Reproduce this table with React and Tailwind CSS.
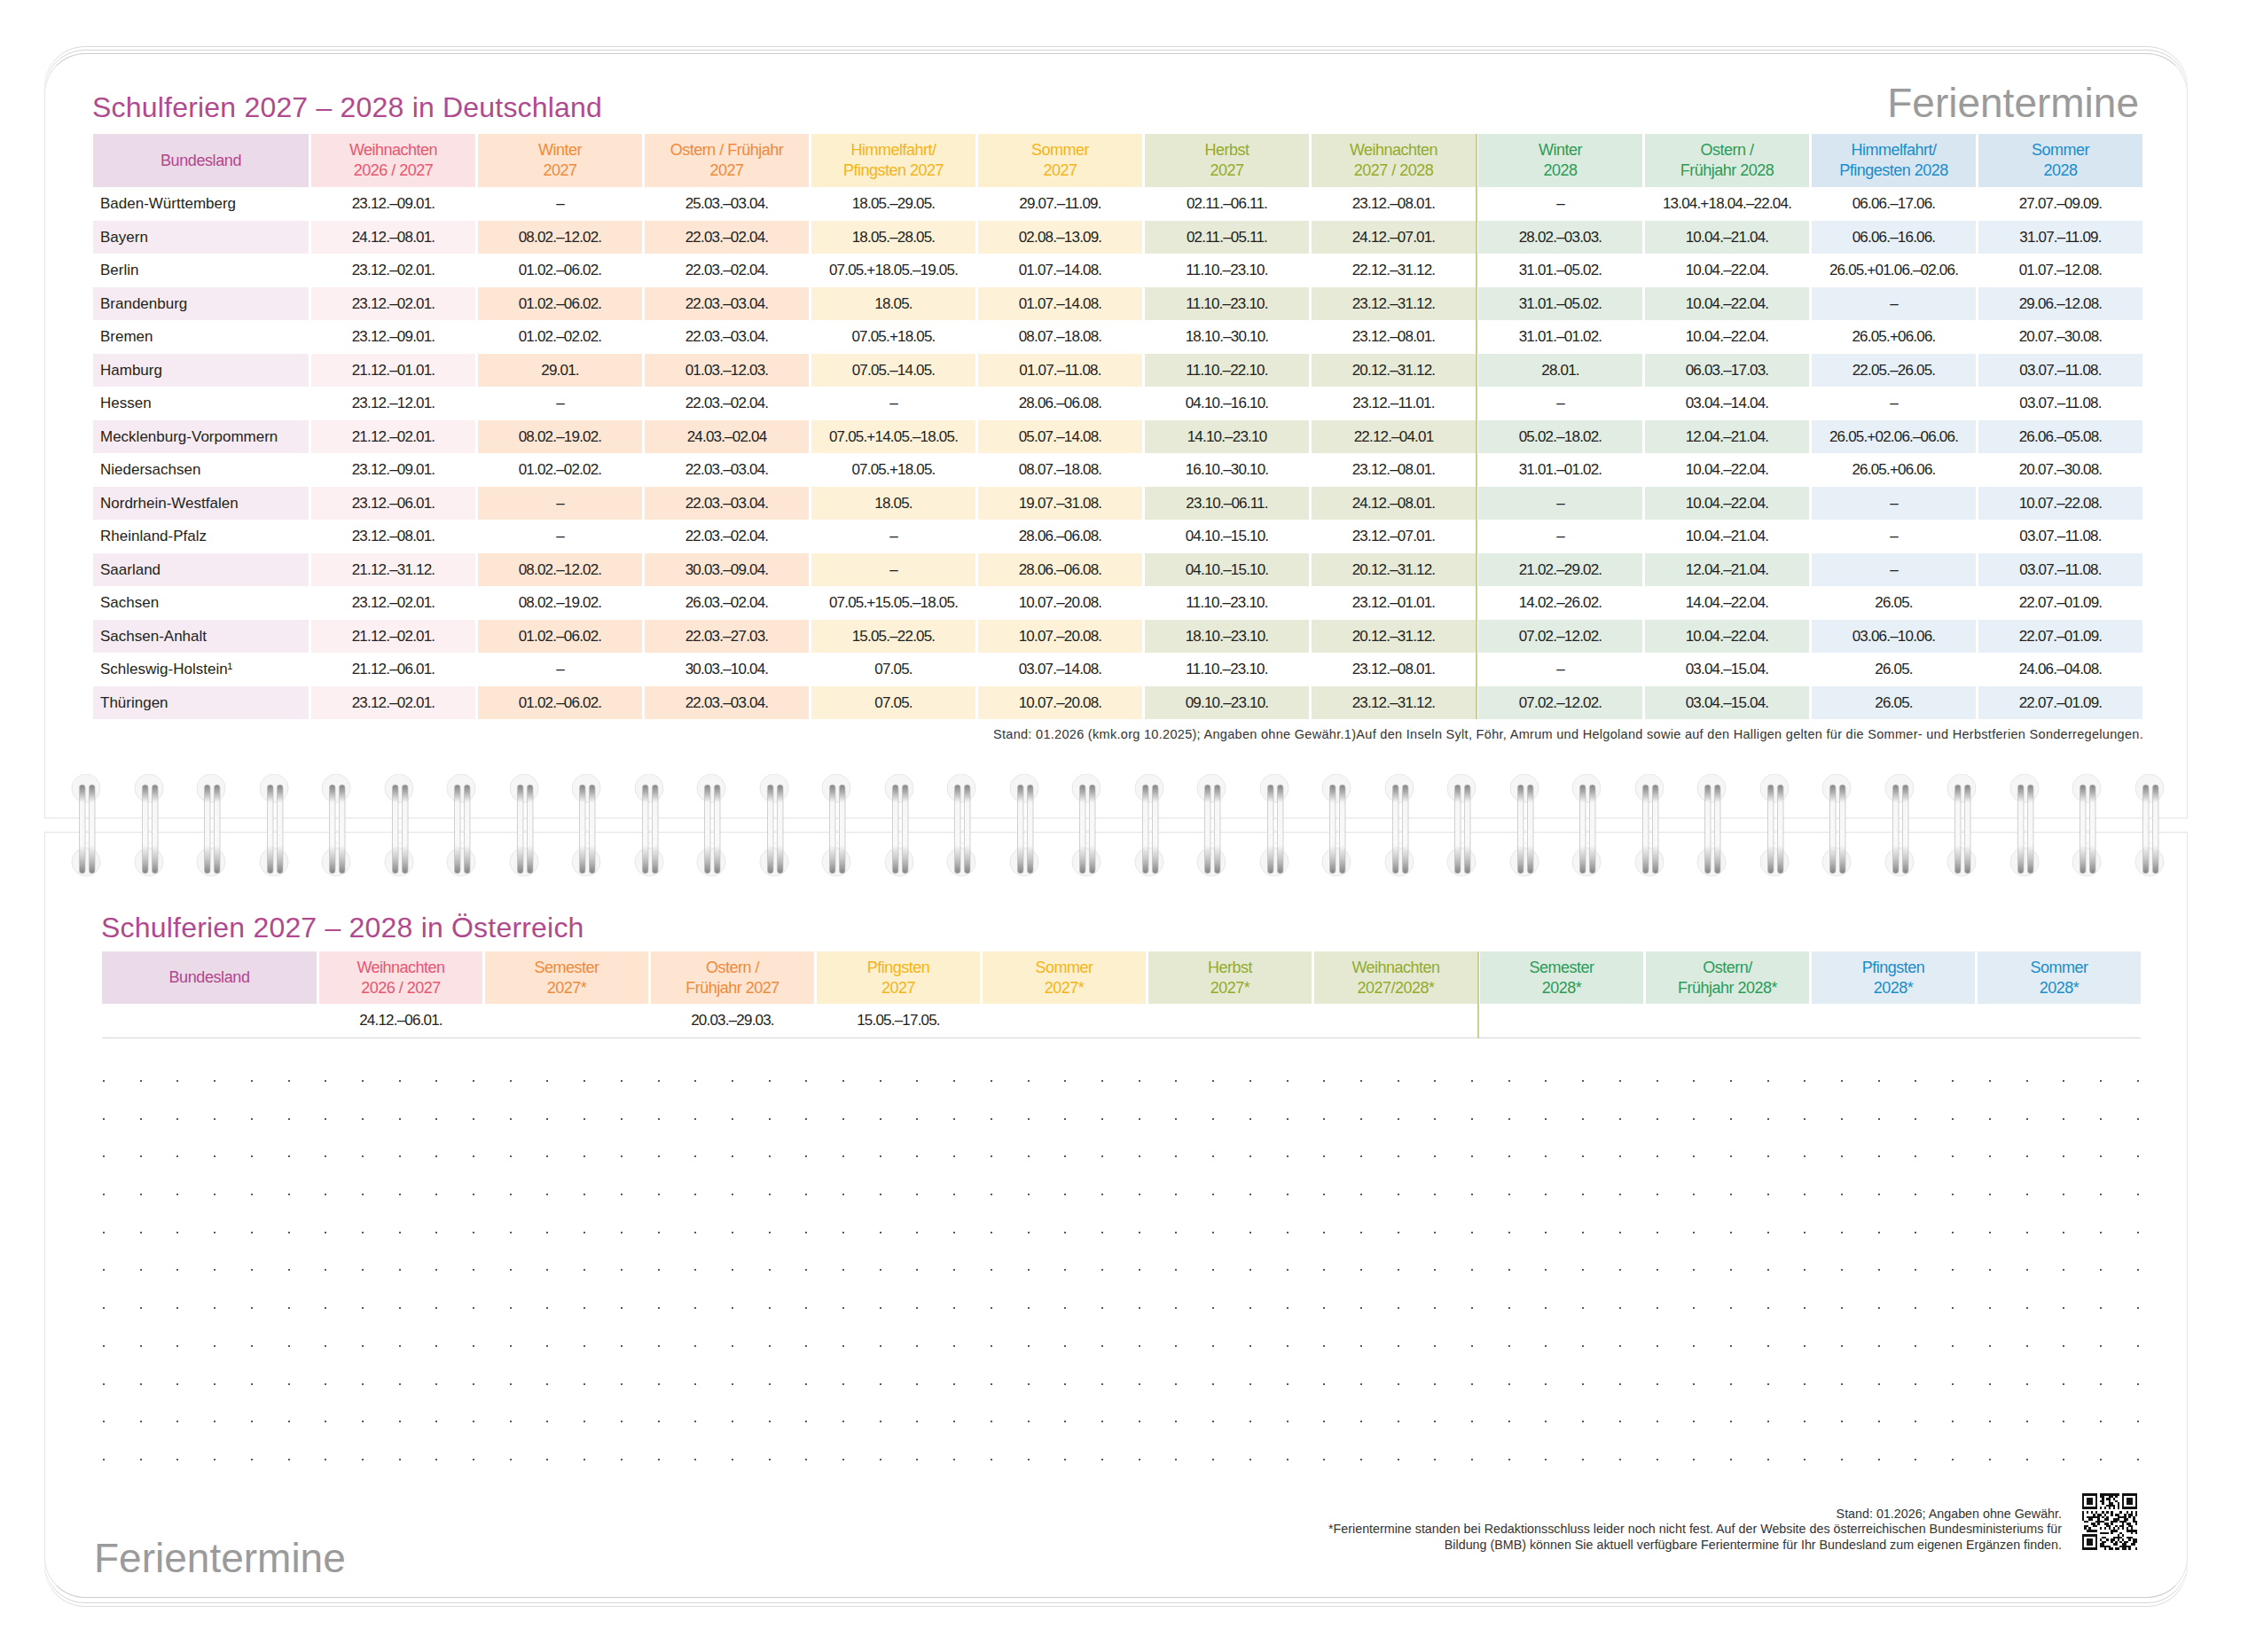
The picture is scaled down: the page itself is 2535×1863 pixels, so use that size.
import React from 'react';

// column colour groups: header fill + text, and the tint used on the shaded rows
const groups = {
  bl: { head: 'bg-[#ebdae7] text-[#b2478e]', alt: 'bg-[#f6ebf3]' },
  pink: { head: 'bg-[#fbe2e4] text-[#e9566f]', alt: 'bg-[#fdf0f2]' },
  orange: { head: 'bg-[#fde5d2] text-[#f08a3a]', alt: 'bg-[#fde6d4]' },
  yellow: { head: 'bg-[#fdf0cf] text-[#f4b417]', alt: 'bg-[#fdf2d7]' },
  olive: { head: 'bg-[#e6e9d2] text-[#93ab29]', alt: 'bg-[#e7ead6]' },
  green: { head: 'bg-[#dcebdf] text-[#2b9b58]', alt: 'bg-[#e1ede3]' },
  blue: { head: 'bg-[#d8e6f1] text-[#1a8dcb]', alt: 'bg-[#e7f0f7]' },
  blueAt: { head: 'bg-[#e2ecf5] text-[#1a8dcb]', alt: 'bg-[#e7f0f7]' },
};

const deCols = [
  { g: 'pink', label: ['Weihnachten', '2026 / 2027'] },
  { g: 'orange', label: ['Winter', '2027'] },
  { g: 'orange', label: ['Ostern / Frühjahr', '2027'] },
  { g: 'yellow', label: ['Himmelfahrt/', 'Pfingsten 2027'] },
  { g: 'yellow', label: ['Sommer', '2027'] },
  { g: 'olive', label: ['Herbst', '2027'] },
  { g: 'olive', label: ['Weihnachten', '2027 / 2028'] },
  { g: 'green', label: ['Winter', '2028'] },
  { g: 'green', label: ['Ostern /', 'Frühjahr 2028'] },
  { g: 'blue', label: ['Himmelfahrt/', 'Pfingesten 2028'] },
  { g: 'blue', label: ['Sommer', '2028'] },
];

const atCols = [
  { g: 'pink', label: ['Weihnachten', '2026 / 2027'] },
  { g: 'orange', label: ['Semester', '2027*'] },
  { g: 'orange', label: ['Ostern /', 'Frühjahr 2027'] },
  { g: 'yellow', label: ['Pfingsten', '2027'] },
  { g: 'yellow', label: ['Sommer', '2027*'] },
  { g: 'olive', label: ['Herbst', '2027*'] },
  { g: 'olive', label: ['Weihnachten', '2027/2028*'] },
  { g: 'green', label: ['Semester', '2028*'] },
  { g: 'green', label: ['Ostern/', 'Frühjahr 2028*'] },
  { g: 'blueAt', label: ['Pfingsten', '2028*'] },
  { g: 'blueAt', label: ['Sommer', '2028*'] },
];

const deRows = [
  ['Baden-Württemberg', '23.12.–09.01.', '–', '25.03.–03.04.', '18.05.–29.05.', '29.07.–11.09.', '02.11.–06.11.', '23.12.–08.01.', '–', '13.04.+18.04.–22.04.', '06.06.–17.06.', '27.07.–09.09.'],
  ['Bayern', '24.12.–08.01.', '08.02.–12.02.', '22.03.–02.04.', '18.05.–28.05.', '02.08.–13.09.', '02.11.–05.11.', '24.12.–07.01.', '28.02.–03.03.', '10.04.–21.04.', '06.06.–16.06.', '31.07.–11.09.'],
  ['Berlin', '23.12.–02.01.', '01.02.–06.02.', '22.03.–02.04.', '07.05.+18.05.–19.05.', '01.07.–14.08.', '11.10.–23.10.', '22.12.–31.12.', '31.01.–05.02.', '10.04.–22.04.', '26.05.+01.06.–02.06.', '01.07.–12.08.'],
  ['Brandenburg', '23.12.–02.01.', '01.02.–06.02.', '22.03.–03.04.', '18.05.', '01.07.–14.08.', '11.10.–23.10.', '23.12.–31.12.', '31.01.–05.02.', '10.04.–22.04.', '–', '29.06.–12.08.'],
  ['Bremen', '23.12.–09.01.', '01.02.–02.02.', '22.03.–03.04.', '07.05.+18.05.', '08.07.–18.08.', '18.10.–30.10.', '23.12.–08.01.', '31.01.–01.02.', '10.04.–22.04.', '26.05.+06.06.', '20.07.–30.08.'],
  ['Hamburg', '21.12.–01.01.', '29.01.', '01.03.–12.03.', '07.05.–14.05.', '01.07.–11.08.', '11.10.–22.10.', '20.12.–31.12.', '28.01.', '06.03.–17.03.', '22.05.–26.05.', '03.07.–11.08.'],
  ['Hessen', '23.12.–12.01.', '–', '22.03.–02.04.', '–', '28.06.–06.08.', '04.10.–16.10.', '23.12.–11.01.', '–', '03.04.–14.04.', '–', '03.07.–11.08.'],
  ['Mecklenburg-Vorpommern', '21.12.–02.01.', '08.02.–19.02.', '24.03.–02.04', '07.05.+14.05.–18.05.', '05.07.–14.08.', '14.10.–23.10', '22.12.–04.01', '05.02.–18.02.', '12.04.–21.04.', '26.05.+02.06.–06.06.', '26.06.–05.08.'],
  ['Niedersachsen', '23.12.–09.01.', '01.02.–02.02.', '22.03.–03.04.', '07.05.+18.05.', '08.07.–18.08.', '16.10.–30.10.', '23.12.–08.01.', '31.01.–01.02.', '10.04.–22.04.', '26.05.+06.06.', '20.07.–30.08.'],
  ['Nordrhein-Westfalen', '23.12.–06.01.', '–', '22.03.–03.04.', '18.05.', '19.07.–31.08.', '23.10.–06.11.', '24.12.–08.01.', '–', '10.04.–22.04.', '–', '10.07.–22.08.'],
  ['Rheinland-Pfalz', '23.12.–08.01.', '–', '22.03.–02.04.', '–', '28.06.–06.08.', '04.10.–15.10.', '23.12.–07.01.', '–', '10.04.–21.04.', '–', '03.07.–11.08.'],
  ['Saarland', '21.12.–31.12.', '08.02.–12.02.', '30.03.–09.04.', '–', '28.06.–06.08.', '04.10.–15.10.', '20.12.–31.12.', '21.02.–29.02.', '12.04.–21.04.', '–', '03.07.–11.08.'],
  ['Sachsen', '23.12.–02.01.', '08.02.–19.02.', '26.03.–02.04.', '07.05.+15.05.–18.05.', '10.07.–20.08.', '11.10.–23.10.', '23.12.–01.01.', '14.02.–26.02.', '14.04.–22.04.', '26.05.', '22.07.–01.09.'],
  ['Sachsen-Anhalt', '21.12.–02.01.', '01.02.–06.02.', '22.03.–27.03.', '15.05.–22.05.', '10.07.–20.08.', '18.10.–23.10.', '20.12.–31.12.', '07.02.–12.02.', '10.04.–22.04.', '03.06.–10.06.', '22.07.–01.09.'],
  ['Schleswig-Holstein¹', '21.12.–06.01.', '–', '30.03.–10.04.', '07.05.', '03.07.–14.08.', '11.10.–23.10.', '23.12.–08.01.', '–', '03.04.–15.04.', '26.05.', '24.06.–04.08.'],
  ['Thüringen', '23.12.–02.01.', '01.02.–06.02.', '22.03.–03.04.', '07.05.', '10.07.–20.08.', '09.10.–23.10.', '23.12.–31.12.', '07.02.–12.02.', '03.04.–15.04.', '26.05.', '22.07.–01.09.'],
];

const atData = ['24.12.–06.01.', '', '20.03.–29.03.', '15.05.–17.05.', '', '', '', '', '', '', ''];

const deGrid = 'grid grid-cols-[243px_repeat(11,185px)] gap-x-[3px]';
const atGrid = 'grid grid-cols-[242px_repeat(11,184px)] gap-x-[3px]';

function HeaderRow({ grid, cols, height }) {
  return (
    <div className={`${grid} ${height}`}>
      <div className={`flex items-center justify-center text-[18px] tracking-[-0.4px] ${groups.bl.head}`}>
        Bundesland
      </div>
      {cols.map((c, i) => (
        <div
          key={i}
          className={`flex flex-col items-center justify-center text-center text-[18px] leading-[23px] tracking-[-0.5px] ${groups[c.g].head}`}
        >
          <span>{c.label[0]}</span>
          <span>{c.label[1]}</span>
        </div>
      ))}
    </div>
  );
}

function Ring() {
  return (
    <svg width="40" height="120" viewBox="0 0 40 120" className="shrink-0">
      <defs>
        <linearGradient id="bar" x1="0" y1="0" x2="0" y2="1">
          <stop offset="0" stopColor="#858585" />
          <stop offset="0.08" stopColor="#ababab" />
          <stop offset="0.2" stopColor="#f7f7f7" />
          <stop offset="0.68" stopColor="#f9f9f9" />
          <stop offset="0.84" stopColor="#c6c6c6" />
          <stop offset="1" stopColor="#838383" />
        </linearGradient>
      </defs>
      <circle cx="20" cy="16" r="16" fill="#f7f6f7" stroke="#e9e6e9" strokeWidth="1" />
      <circle cx="20" cy="99" r="16" fill="#f7f6f7" stroke="#e9e6e9" strokeWidth="1" />
      {[12.5, 23.5].map((x) => (
        <rect key={x} x={x} y="12" width="6.5" height="100" rx="3.2" fill="url(#bar)" stroke="#bdbdbd" strokeWidth="0.7" />
      ))}
      <line x1="19.5" y1="50" x2="23.5" y2="50" stroke="#e4e4e4" strokeWidth="0.8" />
      <line x1="19.5" y1="64" x2="23.5" y2="64" stroke="#e4e4e4" strokeWidth="0.8" />
      <line x1="19.5" y1="78" x2="23.5" y2="78" stroke="#e4e4e4" strokeWidth="0.8" />
    </svg>
  );
}

function QrCode() {
  const n = 25;
  const mods = [];
  const inFinder = (x, y) => (x < 8 && y < 8) || (x >= n - 8 && y < 8) || (x < 8 && y >= n - 8);
  for (let y = 0; y < n; y++) {
    for (let x = 0; x < n; x++) {
      if (inFinder(x, y)) continue;
      let on;
      if (y === 6) on = x % 2 === 0;
      else if (x === 6) on = y % 2 === 0;
      else on = (x * 37 + y * 91 + x * y * 13 + (x ^ y) * 7) % 11 < 5;
      if (on) mods.push(<rect key={`${x}-${y}`} x={x} y={y} width="1" height="1" />);
    }
  }
  const finder = (x, y) => (
    <g key={`f${x}${y}`}>
      <rect x={x} y={y} width="7" height="7" fill="#111" />
      <rect x={x + 1} y={y + 1} width="5" height="5" fill="#fff" />
      <rect x={x + 2} y={y + 2} width="3" height="3" fill="#111" />
    </g>
  );
  return (
    <svg width="62" height="64" viewBox="0 0 25 25" preserveAspectRatio="none" shapeRendering="crispEdges" className="shrink-0">
      <g fill="#111">{mods}</g>
      {finder(0, 0)}
      {finder(n - 7, 0)}
      {finder(0, n - 7)}
    </svg>
  );
}

export default function App() {
  return (
    <div className="relative w-[2535px] h-[1863px] overflow-hidden bg-white pt-[60px] pl-[50px] font-['Liberation_Sans',Arial,sans-serif] text-[#231f20]">
      {/* upper page */}
      <div className="w-[2417px] h-[863px] rounded-t-[46px] border border-[#e6e2e6] border-t-[#cdc9cd] border-b-[#e8e1e9] bg-white pt-[32px] pl-[53px] pr-[50px] shadow-[0_-3px_0_0_#fff,0_-4px_0_0_#d6d3d6,0_-7px_0_0_#fff,0_-8px_0_0_#dcdadc]">
        <div className="flex items-baseline justify-between">
          <h1 className="text-[32px] leading-[32px] tracking-[0.2px] text-[#b04a8e]">Schulferien 2027 – 2028 in Deutschland</h1>
          <div className="mr-[4px] text-[46px] leading-[46px] text-[#9b9b9b]">Ferientermine</div>
        </div>

        <div className="relative ml-[1px] mt-[12px] w-[2311px]">
          <HeaderRow grid={deGrid} cols={deCols} height="h-[60px]" />
          {deRows.map((r, ri) => {
            const alt = ri % 2 === 1;
            return (
              <div key={r[0]} className={`${deGrid} h-[37.5px] text-[17px]`}>
                <div className={`flex items-center pl-[8px] ${alt ? groups.bl.alt : ''}`}>{r[0]}</div>
                {r.slice(1).map((v, i) => (
                  <div
                    key={i}
                    className={`flex items-center justify-center tracking-[-0.8px] ${alt ? groups[deCols[i].g].alt : ''}`}
                  >
                    {v}
                  </div>
                ))}
              </div>
            );
          })}
          <div className="absolute top-0 bottom-0 left-[1559px] w-[2px] bg-[#c6d090]" />
        </div>

        <p className="mt-[9px] w-[2313px] text-right text-[14.5px] leading-[16px] tracking-[0.3px] text-[#333]">
          Stand: 01.2026 (kmk.org 10.2025); Angaben ohne Gewähr.1)Auf den Inseln Sylt, Föhr, Amrum und Helgoland sowie auf den Halligen gelten für die Sommer- und Herbstferien Sonderregelungen.
        </p>
      </div>

      {/* lower page */}
      <div className="mt-[15px] w-[2417px] h-[864px] rounded-b-[46px] border border-[#e6e2e6] border-t-[#e8e1e9] border-b-[#cdc9cd] bg-white pt-[91px] pl-[63px] pr-[52px] shadow-[0_5px_0_0_#fff,0_6px_0_0_#d6d3d6,0_9px_0_0_#fff,0_10px_0_0_#dcdadc]">
        <h2 className="text-[32px] leading-[32px] tracking-[0.2px] text-[#b04a8e]">Schulferien 2027 – 2028 in Österreich</h2>

        <div className="relative ml-[1px] mt-[11px] w-[2299px]">
          <HeaderRow grid={atGrid} cols={atCols} height="h-[59px]" />
          <div className={`${atGrid} h-[39px] border-b border-[#d6d6d6] text-[17px]`}>
            <div />
            {atData.map((v, i) => (
              <div key={i} className="flex items-center justify-center tracking-[-0.8px]">
                {v}
              </div>
            ))}
          </div>
          <div className="absolute top-0 bottom-0 left-[1551px] w-[2px] bg-[#c6d090]" />
        </div>

        {/* dot grid */}
        <div className="ml-[2px] mt-[47px] flex w-[2296px] flex-col gap-y-[40.7px]">
          {Array.from({ length: 11 }).map((_, r) => (
            <div key={r} className="flex h-[2px] justify-between">
              {Array.from({ length: 56 }).map((__, c) => (
                <span key={c} className="h-[2px] w-[2px] bg-[#5a5a5a]" />
              ))}
            </div>
          ))}
        </div>

        <div className="mt-[37px] flex items-start justify-between">
          <div className="-ml-[8px] mt-[50px] text-[46px] leading-[46px] text-[#9b9b9b]">Ferientermine</div>
          <div className="mr-[4px] flex items-start gap-[23px]">
            <div className="mt-[15px] text-right text-[14.3px] leading-[17.5px] text-[#333]">
              <p>Stand: 01.2026; Angaben ohne Gewähr.</p>
              <p>*Ferientermine standen bei Redaktionsschluss leider noch nicht fest. Auf der Website des österreichischen Bundesministeriums für</p>
              <p>Bildung (BMB) können Sie aktuell verfügbare Ferientermine für Ihr Bundesland zum eigenen Ergänzen finden.</p>
            </div>
            <QrCode />
          </div>
        </div>
      </div>

      {/* spiral binding lies over both page edges */}
      <div className="absolute left-[77px] top-[873px] flex gap-[30.5px]">
        {Array.from({ length: 34 }).map((_, i) => (
          <Ring key={i} />
        ))}
      </div>
    </div>
  );
}
